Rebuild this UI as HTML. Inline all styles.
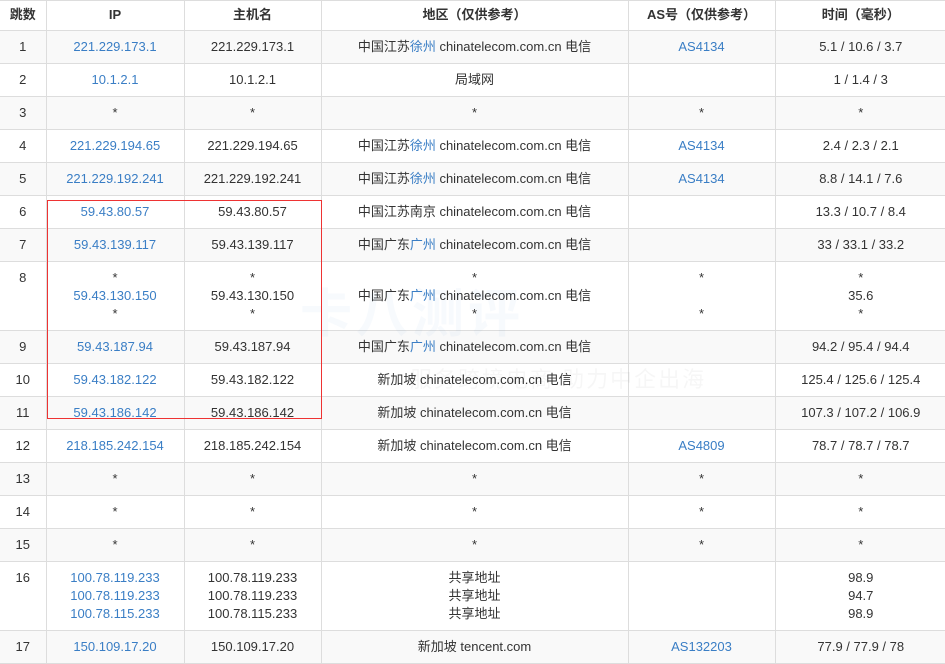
<!DOCTYPE html>
<html><head><meta charset="utf-8"><style>
body{margin:0;background:#fff;width:945px;height:663px;overflow:hidden;position:relative;font-family:"Liberation Sans","Noto Sans CJK SC",sans-serif;font-size:13px;color:#333}
table{border-collapse:collapse;table-layout:fixed;width:946px;position:absolute;left:0;top:0}
td,th{border:1px solid #ddd;text-align:center;vertical-align:top;padding:7px 0 0;line-height:18px;box-sizing:border-box;white-space:nowrap}
th{height:30px;font-weight:bold;padding-top:5px;vertical-align:top}
tr{height:33px}
tr.t{height:69px}
tbody tr:nth-child(odd){background:#f9f9f9}
.b{color:#3a7ec5}
.k{color:#333}
tr>*:first-child{border-left:none}
tr>*:last-child{border-right:none}
.red{position:absolute;left:47px;top:200px;width:273px;height:217px;border:1px solid #e33;pointer-events:none}
.wm{position:absolute;left:300px;top:272px;font-size:52px;font-weight:bold;color:rgba(60,130,210,0.045);letter-spacing:4px}
.wm2{position:absolute;left:410px;top:362px;font-size:22px;color:rgba(0,0,0,0.035);letter-spacing:2px}
</style></head><body>
<table>
<colgroup><col style="width:46px"><col style="width:138px"><col style="width:137px"><col style="width:307px"><col style="width:147px"><col style="width:171px"></colgroup>
<thead><tr style="height:30px"><th>跳数</th><th>IP</th><th>主机名</th><th>地区（仅供参考）</th><th>AS号（仅供参考）</th><th>时间（毫秒）</th></tr></thead>
<tbody>
<tr><td>1</td><td class="b">221.229.173.1</td><td>221.229.173.1</td><td>中国江苏<span class="b">徐州</span> chinatelecom.com.cn 电信</td><td class="b">AS4134</td><td>5.1 / 10.6 / 3.7</td></tr>
<tr><td>2</td><td class="b">10.1.2.1</td><td>10.1.2.1</td><td>局域网</td><td></td><td>1 / 1.4 / 3</td></tr>
<tr><td>3</td><td>*</td><td>*</td><td>*</td><td>*</td><td>*</td></tr>
<tr><td>4</td><td class="b">221.229.194.65</td><td>221.229.194.65</td><td>中国江苏<span class="b">徐州</span> chinatelecom.com.cn 电信</td><td class="b">AS4134</td><td>2.4 / 2.3 / 2.1</td></tr>
<tr><td>5</td><td class="b">221.229.192.241</td><td>221.229.192.241</td><td>中国江苏<span class="b">徐州</span> chinatelecom.com.cn 电信</td><td class="b">AS4134</td><td>8.8 / 14.1 / 7.6</td></tr>
<tr><td>6</td><td class="b">59.43.80.57</td><td>59.43.80.57</td><td>中国江苏南京 chinatelecom.com.cn 电信</td><td></td><td>13.3 / 10.7 / 8.4</td></tr>
<tr><td>7</td><td class="b">59.43.139.117</td><td>59.43.139.117</td><td>中国广东<span class="b">广州</span> chinatelecom.com.cn 电信</td><td></td><td>33 / 33.1 / 33.2</td></tr>
<tr class="t"><td>8</td><td><span class="k">*</span><br><span class="b">59.43.130.150</span><br><span class="k">*</span></td><td>*<br>59.43.130.150<br>*</td><td>*<br>中国广东<span class="b">广州</span> chinatelecom.com.cn 电信<br>*</td><td>*<br><br>*</td><td>*<br>35.6<br>*</td></tr>
<tr><td>9</td><td class="b">59.43.187.94</td><td>59.43.187.94</td><td>中国广东<span class="b">广州</span> chinatelecom.com.cn 电信</td><td></td><td>94.2 / 95.4 / 94.4</td></tr>
<tr><td>10</td><td class="b">59.43.182.122</td><td>59.43.182.122</td><td>新加坡 chinatelecom.com.cn 电信</td><td></td><td>125.4 / 125.6 / 125.4</td></tr>
<tr><td>11</td><td class="b">59.43.186.142</td><td>59.43.186.142</td><td>新加坡 chinatelecom.com.cn 电信</td><td></td><td>107.3 / 107.2 / 106.9</td></tr>
<tr><td>12</td><td class="b">218.185.242.154</td><td>218.185.242.154</td><td>新加坡 chinatelecom.com.cn 电信</td><td class="b">AS4809</td><td>78.7 / 78.7 / 78.7</td></tr>
<tr><td>13</td><td>*</td><td>*</td><td>*</td><td>*</td><td>*</td></tr>
<tr><td>14</td><td>*</td><td>*</td><td>*</td><td>*</td><td>*</td></tr>
<tr><td>15</td><td>*</td><td>*</td><td>*</td><td>*</td><td>*</td></tr>
<tr class="t"><td>16</td><td class="b">100.78.119.233<br>100.78.119.233<br>100.78.115.233</td><td>100.78.119.233<br>100.78.119.233<br>100.78.115.233</td><td>共享地址<br>共享地址<br>共享地址</td><td></td><td>98.9<br>94.7<br>98.9</td></tr>
<tr><td>17</td><td class="b">150.109.17.20</td><td>150.109.17.20</td><td>新加坡 tencent.com</td><td class="b">AS132203</td><td>77.9 / 77.9 / 78</td></tr>
</tbody></table>
<div class="wm">卡八测评</div>
<div class="wm2">服务跨境电商 助力中企出海</div>
<div class="red"></div>
</body></html>
